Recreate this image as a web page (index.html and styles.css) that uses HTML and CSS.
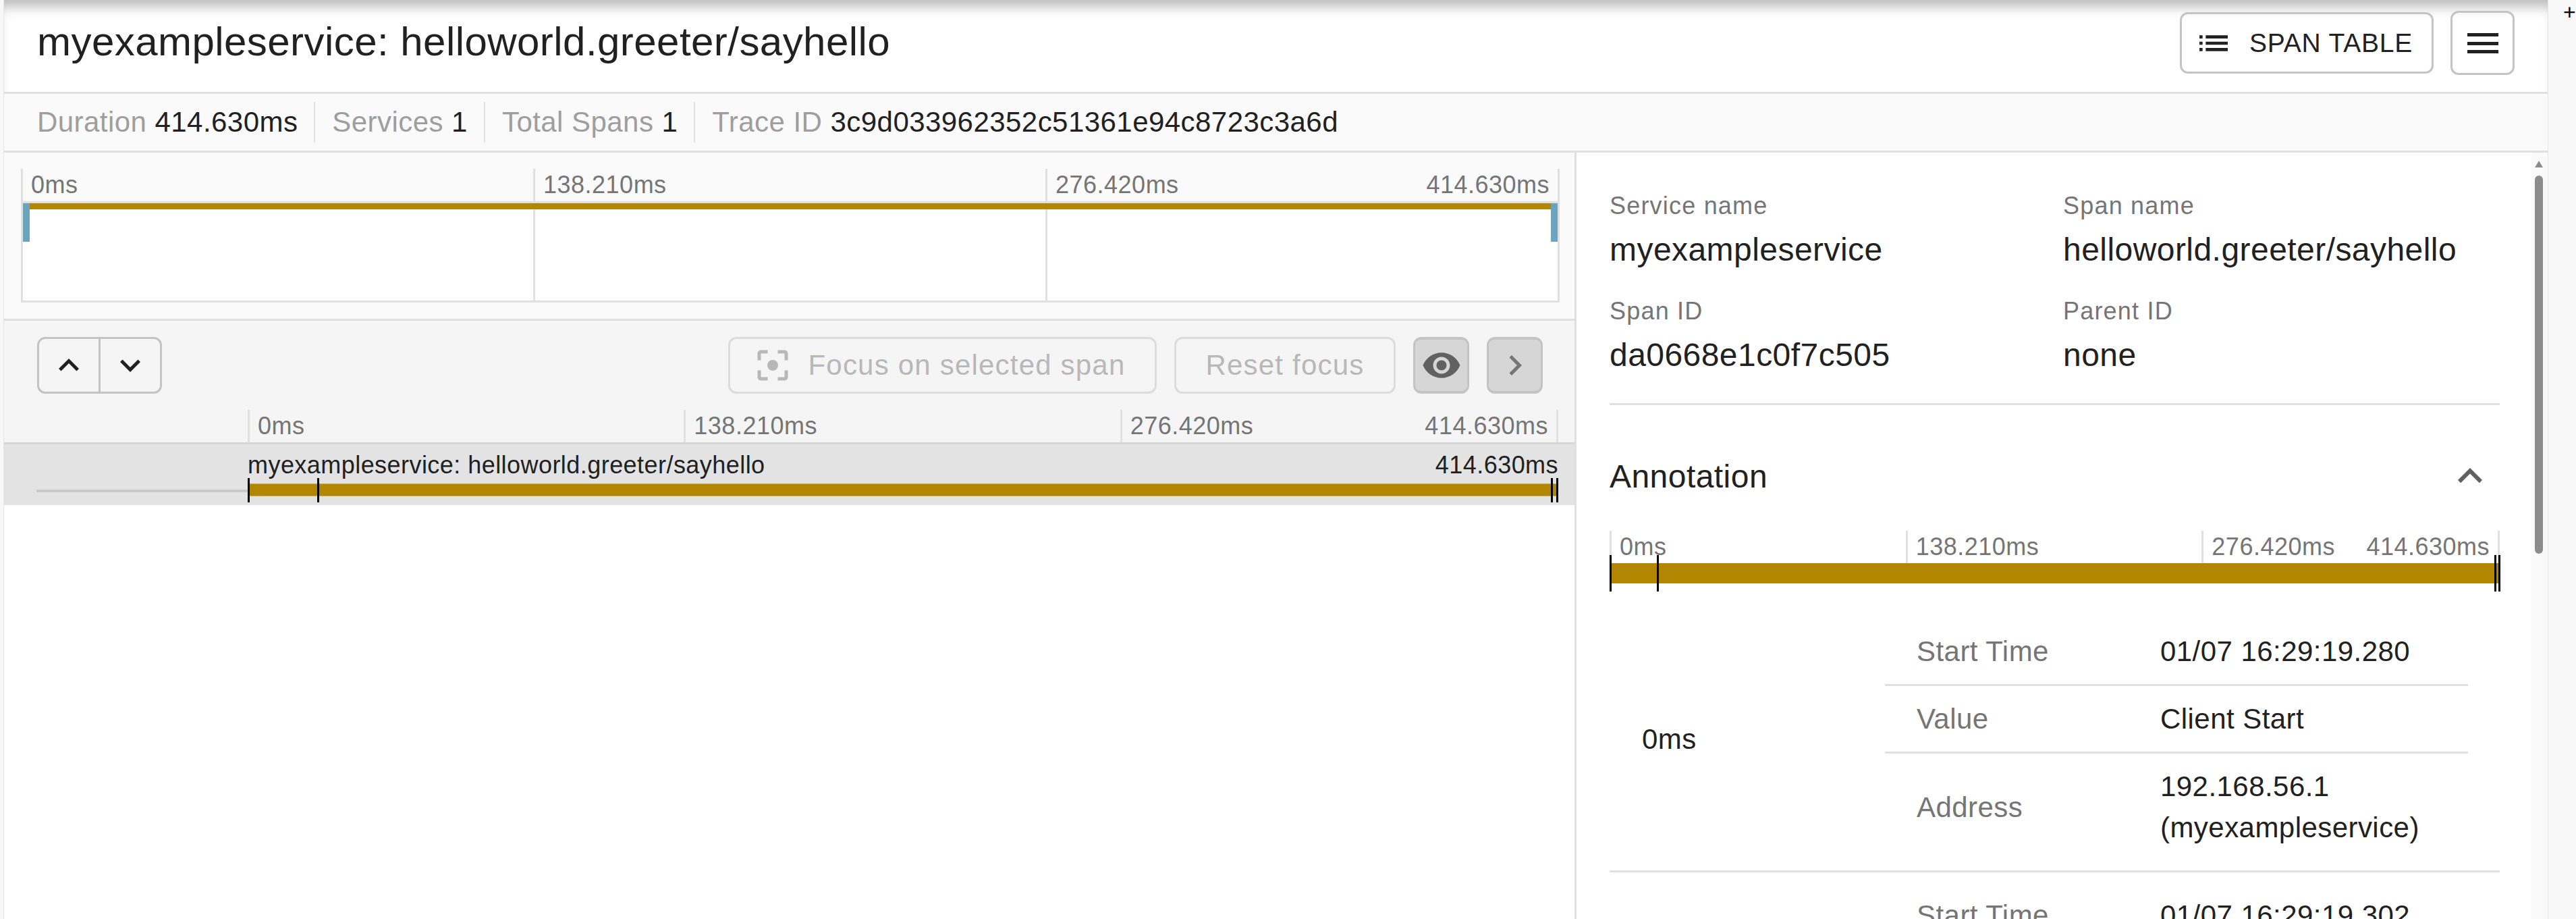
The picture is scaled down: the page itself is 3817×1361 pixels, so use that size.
FILE: index.html
```html
<!DOCTYPE html>
<html lang="en">

<head>
    <meta charset="UTF-8">
    <title>myexampleservice: helloworld.greeter/sayhello</title>
    <link rel="stylesheet" href="styles.css">
</head>

<body>
    <div class="gutter"></div>
    <div class="app">
        <header class="head">
            <h1 class="trace-title">myexampleservice: helloworld.greeter/sayhello</h1>
            <div class="head-actions">
                <button class="btn btn-table">
                    <svg class="icon-list" viewBox="3 7 18 10"><path d="M3 13h2v-2H3v2zm0 4h2v-2H3v2zm0-8h2V7H3v2zm4 4h14v-2H7v2zm0 4h14v-2H7v2zM7 7v2h14V7H7z"/></svg>
                    SPAN TABLE
                </button>
                <button class="btn btn-menu">
                    <svg class="icon-bars" viewBox="0 0 46 30"><rect width="46" height="5"/><rect y="13" width="46" height="5"/><rect y="25" width="46" height="5"/></svg>
                </button>
            </div>
        </header>

        <div class="stats">
            <div class="stat"><span class="stat-label">Duration</span> 414.630ms</div>
            <div class="stat"><span class="stat-label">Services</span> 1</div>
            <div class="stat"><span class="stat-label">Total Spans</span> 1</div>
            <div class="stat"><span class="stat-label">Trace ID</span> 3c9d033962352c51361e94c8723c3a6d</div>
        </div>

        <div class="panes">
            <div class="pane-left">
                <section class="overview">
                    <div class="ticks overview-ticks">
                        <div class="tick">0ms</div>
                        <div class="tick">138.210ms</div>
                        <div class="tick tick-last"><span>276.420ms</span><span>414.630ms</span></div>
                    </div>
                    <div class="minimap">
                        <div class="ticks minimap-lines">
                            <div class="tick"></div>
                            <div class="tick"></div>
                            <div class="tick"></div>
                        </div>
                        <div class="minimap-bar"></div>
                        <div class="handle handle-left"></div>
                        <div class="handle handle-right"></div>
                    </div>
                </section>

                <section class="timeline">
                    <div class="toolbar">
                        <div class="btn-group">
                            <button class="btn group-btn">
                                <svg class="icon" viewBox="0 0 24 24"><path d="M12 8l-6 6 1.41 1.41L12 10.83l4.59 4.58L18 14z"/></svg>
                            </button>
                            <button class="btn group-btn">
                                <svg class="icon" viewBox="0 0 24 24"><path d="M16.59 8.59L12 13.17 7.41 8.59 6 10l6 6 6-6z"/></svg>
                            </button>
                        </div>
                        <div class="toolbar-right">
                            <button class="btn btn-disabled btn-focus">
                                <svg class="icon" viewBox="0 0 24 24"><circle cx="12" cy="12" r="3.2"/><path d="M5 15H3v4c0 1.1.9 2 2 2h4v-2H5v-4zM5 5h4V3H5c-1.1 0-2 .9-2 2v4h2V5zm14-2h-4v2h4v4h2V5c0-1.1-.9-2-2-2zm0 16h-4v2h4c1.1 0 2-.9 2-2v-4h-2v4z"/></svg>
                                Focus on selected span
                            </button>
                            <button class="btn btn-disabled btn-reset">Reset focus</button>
                            <button class="btn btn-solid">
                                <svg class="icon icon-eye" viewBox="0 0 24 24"><path d="M12 4.5C7 4.5 2.73 7.61 1 12c1.73 4.39 6 7.5 11 7.5s9.27-3.11 11-7.5c-1.73-4.39-6-7.5-11-7.5zM12 17c-2.76 0-5-2.24-5-5s2.24-5 5-5 5 2.24 5 5-2.24 5-5 5zm0-8c-1.66 0-3 1.34-3 3s1.34 3 3 3 3-1.34 3-3-1.34-3-3-3z"/></svg>
                            </button>
                            <button class="btn btn-solid">
                                <svg class="icon icon-gray" viewBox="0 0 24 24"><path d="M10 6L8.59 7.41 13.17 12l-4.58 4.59L10 18l6-6z"/></svg>
                            </button>
                        </div>
                    </div>
                    <div class="ticks timeline-ticks">
                        <div class="tick">0ms</div>
                        <div class="tick">138.210ms</div>
                        <div class="tick tick-last"><span>276.420ms</span><span>414.630ms</span></div>
                    </div>
                    <div class="span-row">
                        <div class="span-tree"><div class="tree-line"></div></div>
                        <div class="span-main">
                            <div class="span-text">
                                <span>myexampleservice: helloworld.greeter/sayhello</span>
                                <span>414.630ms</span>
                            </div>
                            <div class="span-bar">
                                <i class="mark" style="left: 0"></i>
                                <i class="mark" style="left: 5.3%"></i>
                                <i class="mark" style="left: 99.42%"></i>
                                <i class="mark" style="left: 99.85%"></i>
                            </div>
                        </div>
                    </div>
                </section>
            </div>

            <div class="pane-right">
                <div class="detail">
                    <div class="fields">
                        <div class="field">
                            <div class="field-label">Service name</div>
                            <div class="field-value">myexampleservice</div>
                        </div>
                        <div class="field">
                            <div class="field-label">Span name</div>
                            <div class="field-value">helloworld.greeter/sayhello</div>
                        </div>
                        <div class="field">
                            <div class="field-label">Span ID</div>
                            <div class="field-value">da0668e1c0f7c505</div>
                        </div>
                        <div class="field">
                            <div class="field-label">Parent ID</div>
                            <div class="field-value">none</div>
                        </div>
                    </div>

                    <div class="section-head">
                        <h2 class="section-title">Annotation</h2>
                        <svg class="icon icon-section" viewBox="0 0 24 24"><path d="M12 8l-6 6 1.41 1.41L12 10.83l4.59 4.58L18 14z"/></svg>
                    </div>

                    <div class="ticks annotation-ticks">
                        <div class="tick">0ms</div>
                        <div class="tick">138.210ms</div>
                        <div class="tick tick-last"><span>276.420ms</span><span>414.630ms</span></div>
                    </div>
                    <div class="annotation-bar">
                        <i class="mark" style="left: 0"></i>
                        <i class="mark" style="left: 5.3%"></i>
                        <i class="mark" style="left: 99.42%"></i>
                        <i class="mark" style="left: 99.85%"></i>
                    </div>

                    <div class="annotation">
                        <div class="annotation-time">0ms</div>
                        <div class="annotation-info">
                            <div class="info-row"><div class="info-label">Start Time</div><div>01/07 16:29:19.280</div></div>
                            <div class="info-row"><div class="info-label">Value</div><div>Client Start</div></div>
                            <div class="info-row"><div class="info-label">Address</div><div>192.168.56.1 (myexampleservice)</div></div>
                        </div>
                    </div>
                    <div class="annotation">
                        <div class="annotation-time"></div>
                        <div class="annotation-info">
                            <div class="info-row"><div class="info-label">Start Time</div><div>01/07 16:29:19.302</div></div>
                        </div>
                    </div>
                </div>
                <div class="scroll">
                    <div class="scroll-up"></div>
                    <div class="scroll-thumb"></div>
                </div>
            </div>
        </div>
    </div>
    <div class="rail">+</div>
</body>

</html>
```

FILE: styles.css
```css
html,
body {
    height: 100%;
}

body {
    display: flex;
    margin: 0;
    overflow: hidden;
    font-family: "Liberation Sans", Arial, sans-serif;
    color: #212121;
    background-color: #fff;
}

button {
    font-family: inherit;
}

.gutter {
    width: 6px;
    flex: none;
    background-color: #f8f8f8;
    border-right: 1px solid #e6e6e6;
    box-sizing: border-box;
}

.app {
    flex: 1;
    min-width: 0;
    display: flex;
    flex-direction: column;
}

.rail {
    width: 42px;
    flex: none;
    box-sizing: border-box;
    padding: 0 0 0 22px;
    background-color: #f8f8f8;
    border-left: 1px solid #e6e6e6;
    color: #000;
    font-size: 32px;
    line-height: 36px;
}

/* header */
.head {
    height: 127px;
    flex: none;
    display: flex;
    align-items: center;
    justify-content: space-between;
    padding: 0 49px 9px;
    border-bottom: 3px solid #e0e0e0;
    box-shadow: inset 0 20px 18px -10px rgba(0, 0, 0, 0.27);
}

.trace-title {
    margin: 0 0 5px;
    font-size: 60px;
    font-weight: normal;
    letter-spacing: 0.45px;
}

.head-actions {
    display: flex;
    align-items: center;
    gap: 25px;
}

.btn {
    display: flex;
    align-items: center;
    justify-content: center;
    box-sizing: border-box;
    padding: 0;
    background-color: transparent;
    border: 3px solid #c4c4c4;
    border-radius: 12px;
    color: #212121;
}

.btn-table {
    width: 376px;
    height: 91px;
    justify-content: flex-start;
    padding-left: 26px;
    gap: 32px;
    font-size: 39px;
    letter-spacing: 0.8px;
}

.btn-menu {
    width: 95px;
    height: 95px;
}

.icon-list {
    width: 42px;
    height: 24px;
    fill: #212121;
}

.icon-bars {
    width: 46px;
    height: 30px;
    fill: #212121;
}

.icon {
    width: 60px;
    height: 60px;
    flex: none;
    fill: currentColor;
}

.icon-gray {
    color: #757575;
}

.icon-eye {
    color: #616161;
}

.icon-section {
    width: 72px;
    height: 72px;
    color: #616161;
}

/* stats */
.stats {
    height: 84px;
    flex: none;
    display: flex;
    align-items: center;
    padding-left: 49px;
    background-color: #fafafa;
    border-bottom: 3px solid #e0e0e0;
    font-size: 42px;
    letter-spacing: 0.45px;
}

.stat {
    height: 60px;
    line-height: 60px;
    padding-right: 24px;
    margin-right: 25px;
    border-right: 2px solid #e0e0e0;
    white-space: nowrap;
}

.stat:last-child {
    border-right: 0;
}

.stat-label {
    color: #9e9e9e;
}

/* panes */
.panes {
    flex: 1;
    min-height: 0;
    display: flex;
}

.pane-left {
    width: 2330px;
    flex: none;
    box-sizing: border-box;
    border-right: 3px solid #e0e0e0;
}

.pane-right {
    flex: 1;
    min-width: 0;
    display: flex;
}

/* tick scale */
.ticks {
    display: flex;
    box-sizing: border-box;
    border-right: 3px solid #e0e0e0;
    color: #757575;
    font-size: 36px;
    letter-spacing: 0.5px;
}

.tick {
    flex: 1;
    display: flex;
    justify-content: space-between;
    box-sizing: border-box;
    padding: 0 12px;
    border-left: 3px solid #e0e0e0;
    white-space: nowrap;
}

/* overview */
.overview {
    padding: 24px 22px 24px 25px;
    background-color: #fafafa;
    border-bottom: 3px solid #e0e0e0;
}

.overview-ticks {
    height: 51px;
    line-height: 48px;
    border-bottom: 3px solid #e0e0e0;
}

.minimap {
    position: relative;
    height: 147px;
    box-sizing: border-box;
    background-color: #fff;
    border-bottom: 3px solid #e0e0e0;
}

.minimap-lines {
    height: 100%;
}

.minimap-bar {
    position: absolute;
    top: 0;
    left: 3px;
    right: 3px;
    height: 9px;
    background-color: #b38600;
}

.handle {
    position: absolute;
    top: 0;
    width: 10px;
    height: 57px;
    background-color: #6ca3bd;
}

.handle-left {
    left: 3px;
}

.handle-right {
    right: 3px;
}

/* timeline */
.timeline {
    background-color: #f5f5f5;
}

.toolbar {
    display: flex;
    justify-content: space-between;
    padding: 24px 47px 24px 49px;
}

.toolbar .btn {
    height: 84px;
}

.btn-group {
    display: flex;
}

.group-btn {
    width: 94px;
}

.group-btn:first-child {
    border-radius: 12px 0 0 12px;
}

.group-btn:last-child {
    margin-left: -3px;
    border-radius: 0 12px 12px 0;
}

.toolbar-right {
    display: flex;
    gap: 26px;
}

.btn-disabled {
    border-color: #dcdcdc;
    color: #b8b8b8;
    font-size: 42px;
    letter-spacing: 1.2px;
}

.btn-focus {
    width: 635px;
    gap: 22px;
    padding-right: 10px;
}

.btn-reset {
    width: 328px;
}

.btn-solid {
    width: 83px;
    background-color: #d6d6d6;
    border-color: #c4c4c4;
    border-top-width: 4px;
    border-bottom-width: 4px;
}

.timeline-ticks {
    height: 48px;
    line-height: 48px;
    margin: 0 24px 0 361px;
}

.span-row {
    display: flex;
    height: 90px;
    background-color: #e3e3e3;
    border-top: 3px solid #d6d6d6;
    border-bottom: 0;
    font-size: 36px;
    letter-spacing: 0.45px;
}

.span-tree {
    width: 361px;
    flex: none;
    box-sizing: border-box;
    padding: 67px 0 0 48px;
}

.tree-line {
    height: 4px;
    background-color: #c9c9c9;
}

.span-main {
    flex: 1;
    min-width: 0;
    margin-right: 24px;
}

.span-text {
    display: flex;
    justify-content: space-between;
    height: 58px;
    padding-top: 11px;
    box-sizing: border-box;
    line-height: 40px;
}

.span-bar {
    position: relative;
    height: 19px;
    background-color: #b38600;
    border-top: 1px solid #c9a94d;
    border-bottom: 1px solid #c9a94d;
    box-sizing: border-box;
}

.mark {
    position: absolute;
    top: -9px;
    width: 3px;
    height: 36px;
    background-color: #000;
}

/* detail */
.detail {
    flex: 1;
    min-width: 0;
    height: 100%;
    overflow: hidden;
    box-sizing: border-box;
    padding: 49px 47px 0 49px;
}

.fields {
    display: grid;
    grid-template-columns: 672px 1fr;
    row-gap: 25px;
    padding-bottom: 35px;
    border-bottom: 3px solid #e0e0e0;
}

.field-label {
    color: #757575;
    font-size: 36px;
    line-height: 59px;
    letter-spacing: 1.2px;
}

.field-value {
    font-size: 48px;
    line-height: 72px;
    letter-spacing: 0.45px;
}

.section-head {
    display: flex;
    align-items: center;
    justify-content: space-between;
    height: 72px;
    margin-top: 69px;
    padding-right: 8px;
}

.section-title {
    margin: 0;
    font-size: 48px;
    font-weight: normal;
    letter-spacing: 0.45px;
}

.annotation-ticks {
    height: 48px;
    line-height: 48px;
    margin-top: 45px;
}

.annotation-bar {
    position: relative;
    height: 30px;
    background-color: #b38600;
}

.annotation-bar .mark {
    top: -12px;
    height: 54px;
}

.annotation {
    display: flex;
    align-items: center;
    padding: 15px 47px 15px 0;
    border-bottom: 3px solid #e0e0e0;
    font-size: 42px;
    letter-spacing: 0.45px;
}

.annotation-bar + .annotation {
    margin-top: 37px;
}

.annotation-time {
    width: 408px;
    flex: none;
    box-sizing: border-box;
    padding-left: 48px;
}

.annotation-info {
    flex: 1;
    min-width: 0;
}

.info-row {
    display: grid;
    grid-template-columns: 408px 1fr;
    align-items: center;
    padding: 18px 0;
    border-bottom: 3px solid #e0e0e0;
    line-height: 61px;
}

.info-row:last-child {
    border-bottom: 0;
}

.info-label {
    padding-left: 47px;
    color: #757575;
}

/* scrollbar */
.scroll {
    width: 24px;
    flex: none;
    box-sizing: border-box;
    padding: 12px 0 0 5px;
    background-color: #fafafa;
}

.scroll-up {
    width: 0;
    height: 0;
    margin-left: 0;
    border-left: 6px solid transparent;
    border-right: 6px solid transparent;
    border-bottom: 10px solid #8c8c8c;
}

.scroll-thumb {
    width: 12px;
    height: 560px;
    margin-top: 12px;
    border-radius: 6px;
    background-color: #8c8c8c;
}
```
